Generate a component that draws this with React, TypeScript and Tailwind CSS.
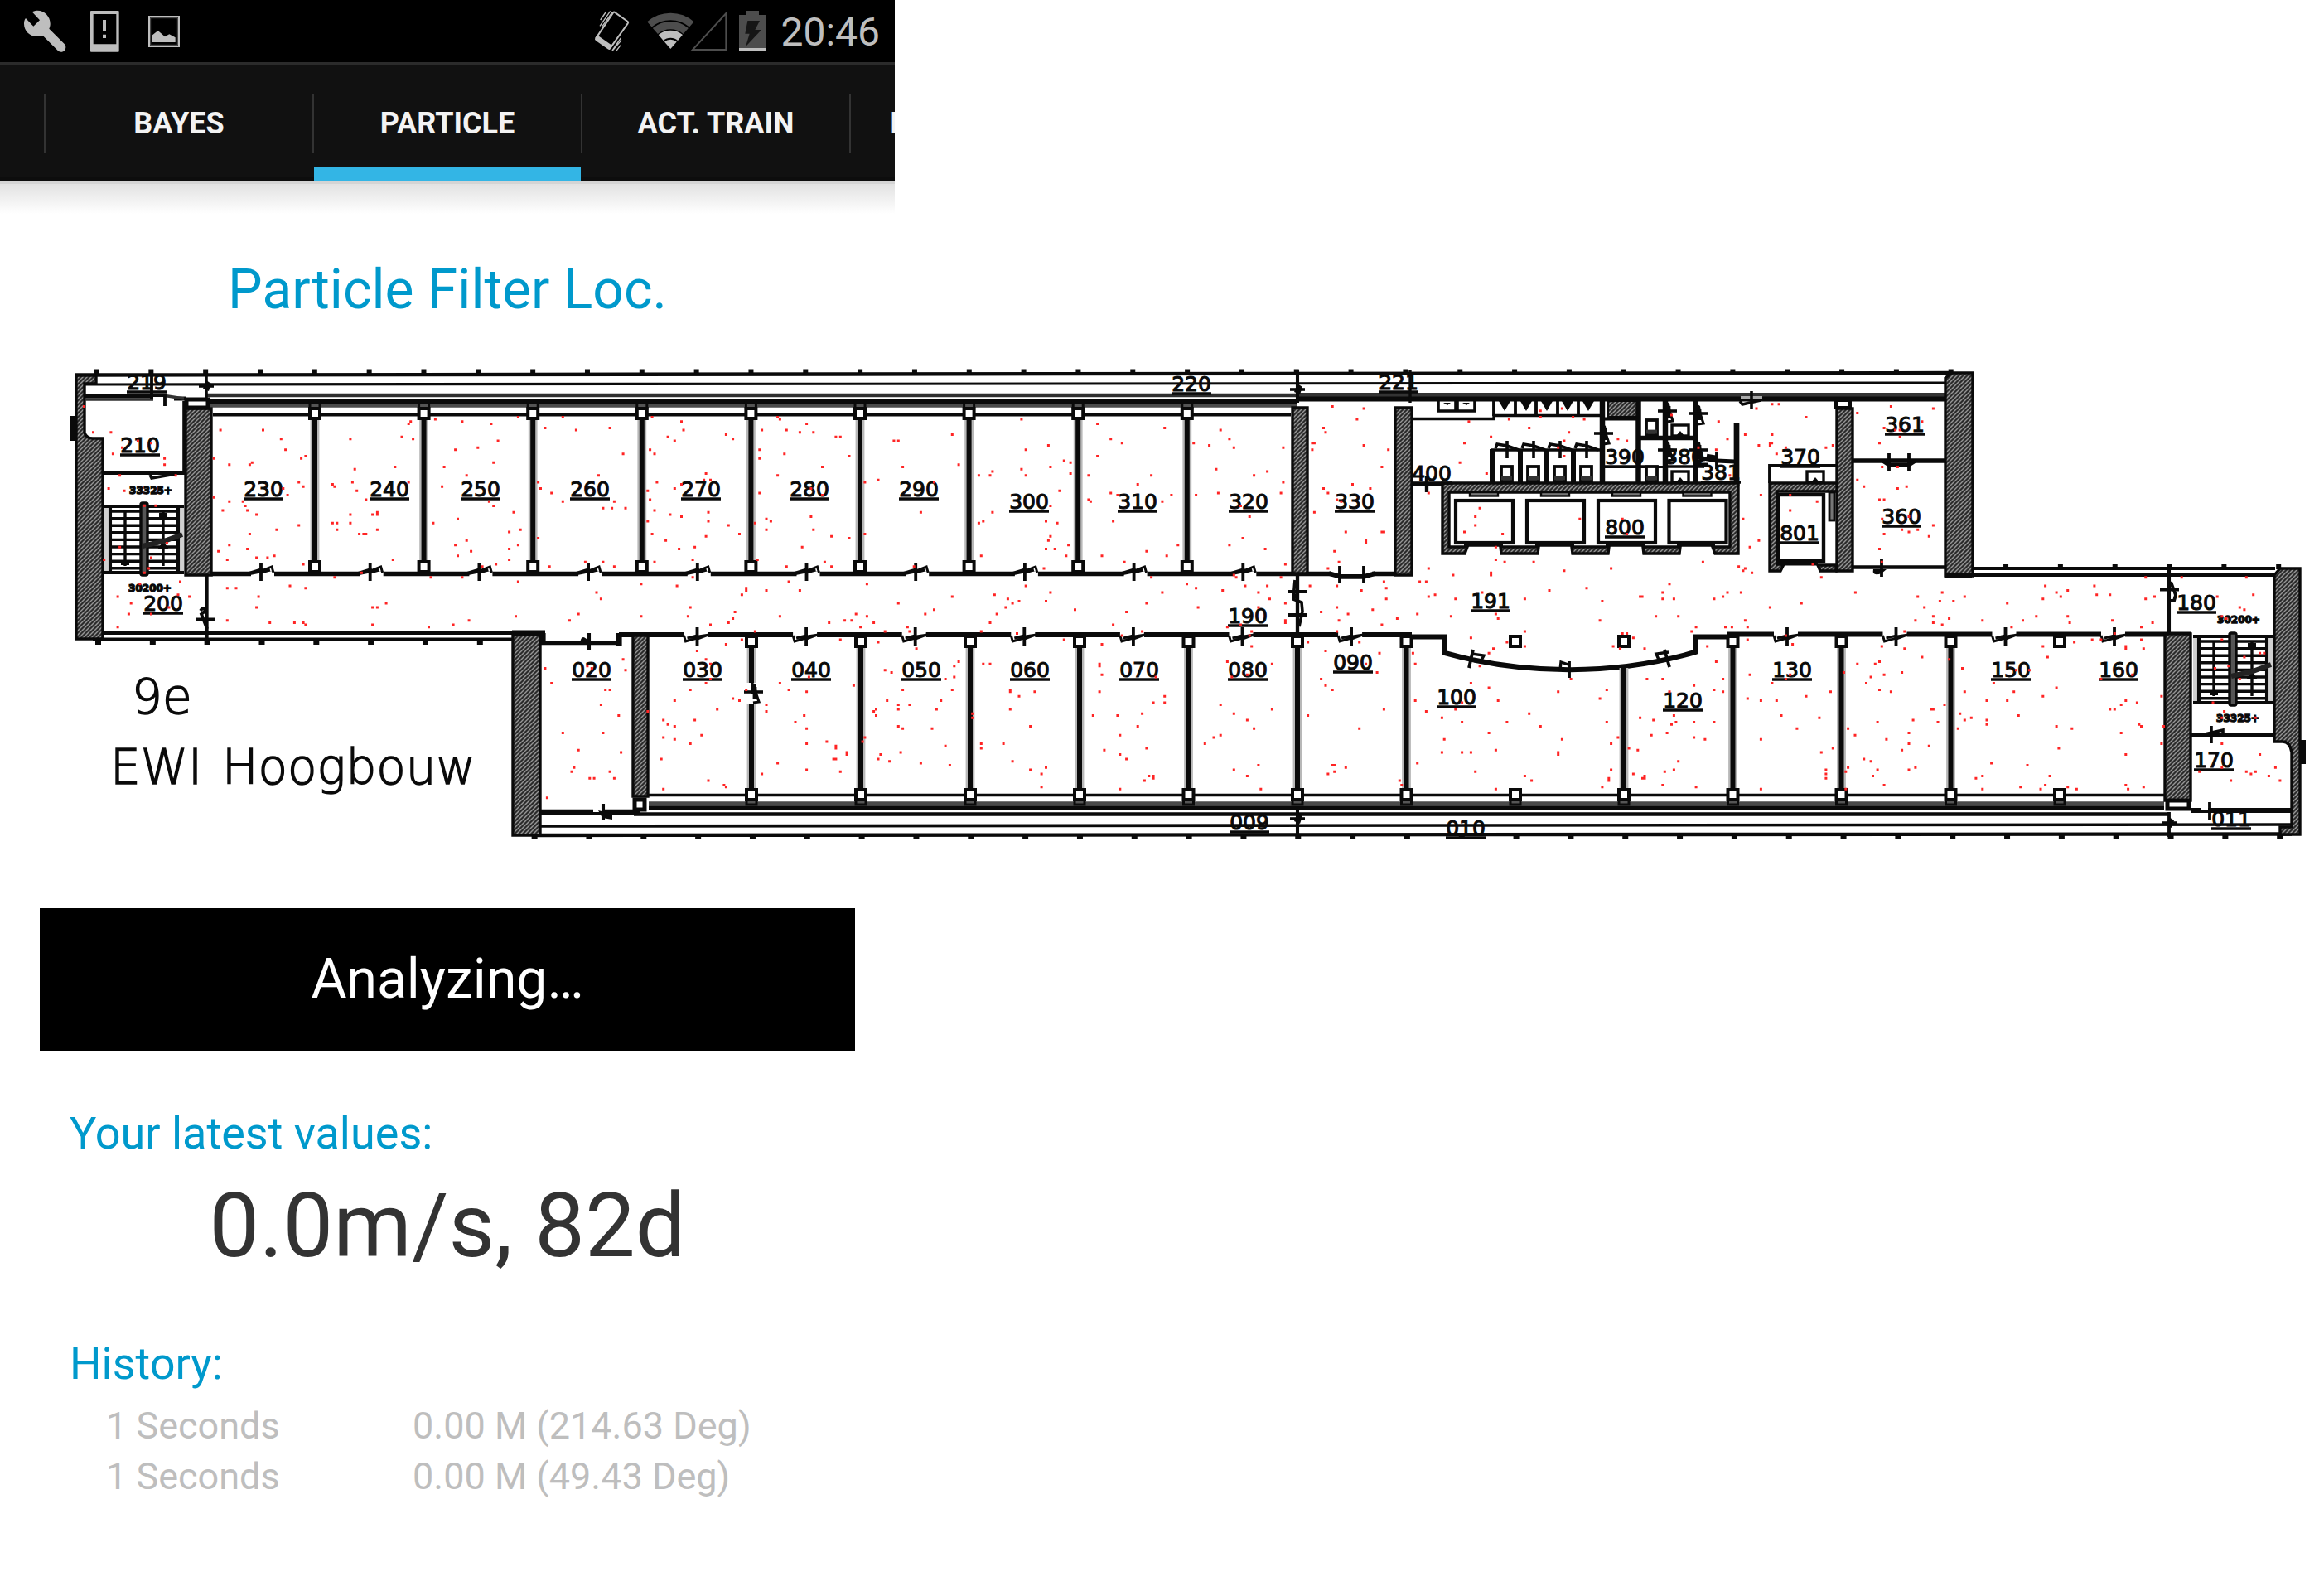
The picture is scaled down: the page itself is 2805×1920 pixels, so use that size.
import React from "react";

type Pt = [number, number];

const PITCH = 65.83;
const WEIGHT = 1.2;
const INK = "#0a0a0a";

/* Particle clouds, one survey tile each: origin, sampling scale and x,y pairs. */
const CLOUDS: { ox: number; sx: number; pts: string }[] = [
  {
    ox: 60,
    sx: 2.8,
    pts: `116,184 147,266 207,266 298,293 343,300 245,314 214,334 388,348 388,368 237,402 426,402 199,443 252,450 320,497 358,497 396,615 237,628 343,661 184,668 335,695 320,709 441,737 305,744 230,784 434,778 472,784 275,805 403,818 267,839 343,839 230,880
577,259 721,259 782,287 797,321 555,348 850,348 865,341 607,368 676,368 684,361 842,423 857,437 789,443 804,464 555,471 607,484 653,484 661,498 668,512 585,512 699,525 842,559 767,573 676,587 607,621 668,634 570,641 600,668 699,661 736,661 759,655 857,682
1220,232 1213,239 1190,280 1228,287 1016,287 1167,375 1031,382 1213,423 1023,423 956,430 963,437 1038,450 1069,478 1107,518 1107,525 1091,525 1016,525 956,552 971,552 1016,552 971,573 1107,573 1046,587 1061,587 1069,587 1160,668 1054,709 963,723
1303,225 1394,232 1492,239 1447,314 1371,321 1333,375 1500,361 1409,402 1326,437 1485,484 1500,498 1379,539 1296,552 1409,607 1371,621 1424,641 1379,655 1508,682 1462,689 1288,723 1394,723
600,757 630,757 812,750 865,757 706,784 699,818 600,859 744,866 827,866 857,866 865,873 1137,805 1091,818 1107,818 1091,873 1281,880 1364,873 1417,859`,
  },
  {
    ox: 600,
    sx: 2.8,
    pts: `3,293 71,218 56,518 79,573 41,580 71,621 41,634 41,668 71,737 63,846
162,252 222,218 267,259 381,252 426,334 343,402 139,423 147,443 184,457 222,484 396,484 358,505 388,505 434,505 139,600 298,675 358,675 177,689 396,689 336,771 351,791 275,839 245,859
524,218 623,232 630,259 577,280 600,293 774,273 797,287 517,321 532,334 706,396 699,416 721,416 540,423 623,430 600,443 509,450 517,478 532,512 585,525 623,532 714,518 714,546 509,546 782,559 524,587 819,587 706,594 570,607 668,628 615,634 661,668 532,675 661,723 487,744 608,750 842,757 842,764 827,778 653,818 804,832 645,846 487,846 797,853 782,866 721,873
948,218 956,225 895,259 978,259 1046,239 1023,266 1069,266 1145,280 1160,280 887,321 887,348 971,334 1190,341 1099,375 948,402 887,457 1061,443 1099,464 1061,532 910,539 925,546 872,552 910,573 1069,573 1130,594 1190,600 1031,628 880,668 1107,675 978,689 1130,689 986,737 910,764 1023,764 956,846 872,894
1538,273 1341,293 1356,293 1371,375 1288,416 1243,423 1477,423 1432,518 1243,587 1409,689 1250,744 1356,805 1477,825 1447,839 1213,839 1250,846 1175,859 1198,859 1122,866 1273,866 1228,880 1387,880 1394,894 1311,894
162,1010 426,982 434,1016 305,1003 320,1010 184,1057 366,1078 381,1078 351,1125 411,1159 222,1214 358,1214 275,1268 419,1275 260,1323 252,1336 381,1336 313,1357 328,1357 396,1357 169,1418
827,920 774,934 676,955 706,982 721,996 721,1044 706,1057 653,1078 842,1078 600,1112 797,1105 819,1112 744,1139 509,1146 562,1173 577,1187 600,1193 668,1173 562,1228 600,1234 691,1221 653,1248 555,1296 714,1364 767,1378 774,1384 562,1391
1160,920 1054,1037 956,1057 986,1078 1046,1084 1205,1064 910,1125 910,1146 1038,1159 1008,1180 1046,1200 1046,1248 1114,1241 1145,1255 1145,1262 1137,1296 1145,1296 1182,1275 1182,1282 948,1309 1046,1330 1160,1336 895,1343
1288,928 1417,948 1311,1016 1333,1023 1371,1078 1318,1112 1356,1125 1394,1125 1356,1139 1500,1112 1485,1139 1281,1139 1273,1146 1281,1159 1356,1193 1371,1200 1470,1200 1243,1228 1235,1241 1364,1275 1296,1282 1288,1296 1326,1303 1432,1309`,
  },
  {
    ox: 1140,
    sx: 2.8,
    pts: `26,273 48,368 26,784 260,225 351,307 275,321 404,355 426,361 358,375 260,382 275,402 426,396 162,389 154,402 116,402 389,450 358,498 162,518 116,552 131,546 343,546 381,552 358,594 351,607 343,634 373,634 419,621 411,655 124,655 336,695 275,750 358,771 343,798 169,778 214,791 230,805 252,798 207,818 177,839 154,866 124,894 245,900 441,825
517,239 744,252 562,287 600,300 517,341 487,402 699,402 653,430 562,457 585,464 767,464 487,478 494,484 736,484 570,546 789,621 683,641 532,655 751,655 608,675 699,723 736,771 683,805 615,832 570,873 668,894 600,907
933,259 963,287 978,314 895,307 842,300 1145,314 918,382 1091,389 1046,402 1145,423 850,464 925,457 1137,457 1001,498 1031,532 1008,600 963,621 1084,634 1152,682 978,716 986,723 1137,723 819,744 850,757 1016,750 1091,750 940,764 1061,771 1099,791 857,818 1061,818 1152,805 1152,859 1152,866 956,880 1001,873 1038,894 1031,907
1311,184 1417,191 1394,225 1281,252 1288,266 1243,300 1250,300 1243,321 1417,307 1379,430 1439,443 1281,443 1296,457 1326,478 1341,484 1250,518 1356,580 1424,607 1424,614 1318,641 1333,675 1296,695 1235,750 1326,750 1409,764 1273,832 1326,818 1447,825 1364,839 1333,859 1326,894
33,1003 48,989 33,1037 3,1044 26,1078 94,1153 94,1166 3,1255 18,1316 404,920 131,996 154,996 222,1078 222,1084 305,1084 252,1098 222,1139 290,1193 199,1248 124,1248 124,1262 230,1303 343,1323 290,1330 328,1343 328,1384
532,934 524,996 524,1003 532,1030 714,1037 524,1084 744,1098 706,1118 744,1118 668,1153 502,1159 585,1159 653,1193 593,1221 683,1262 540,1268 593,1282 615,1296 691,1350 706,1350 706,1357 676,1364 593,1391
1038,941 956,989 1107,996 1023,1030 971,1037 933,1125 1107,1139 978,1153 1023,1173 1046,1200 933,1221 910,1228 880,1248 1061,1316 978,1330 1023,1350 1069,1391
1228,928 1402,928 1288,955 1424,996 1273,1044 1288,1064 1311,1078 1228,1159 1402,1200 1311,1316 1318,1316 1356,1323 1318,1336 1296,1343`,
  },
  {
    ox: 1660,
    sx: 2.8,
    pts: `44,321 22,375 22,580 29,580 29,737 37,757 37,791 74,853 22,873 14,962 6,1023 29,1139 82,1364 89,1378 316,232 391,280 301,300 286,361 376,396 180,457 452,225 520,252 558,198 558,218 631,191 668,218 706,225 654,266 638,293 618,314 638,341 820,287 850,293 1001,212 1092,314 1152,321 1160,232 1190,287 1198,402 1250,273 1288,191 1341,177 1364,177 1341,273 1334,300 1340,300 1334,307 1296,307 1356,334 1387,314 1303,464 1402,464 1402,512
353,505 338,532 338,559 301,580 430,587 691,539 835,539 850,587 1243,539 1296,607 1266,628 407,628 407,668 437,675 535,675 180,695 638,702 797,695 1107,675 263,716 391,709 391,716 1228,689 1250,695 1243,702 1273,709 150,737 172,737 361,771 202,778 180,784 271,791 505,791 588,764 714,757 767,798 895,784 902,784 994,744 971,771 971,791 1009,791 1190,771 1175,784 1145,791 1236,771 1334,818 1440,805 142,839 256,846 407,839 415,853 759,859 948,846 1024,846 1250,859 1258,880 1084,880 1069,894 1183,880 1205,880 505,894 323,914 445,928 505,941 399,948 384,962 353,1003 835,900 850,900 872,914 804,941 827,948 910,948 1122,941 1258,920 1387,907 1410,934
127,962 135,996 135,1112 172,1146 271,1139 293,1118 323,1057 384,1071 415,1112 225,1166 293,1180 445,1180 384,1214 520,1153 558,1193 661,1044 618,1084 782,1078 759,1105 782,1180 820,1228 797,1248 233,1234 225,1275 293,1275 323,1275 407,1268 631,1234 618,1275 618,1282 142,1309 338,1336 505,1350 528,1364 407,1391 797,1330 789,1357 789,1364 767,1384
1152,989 918,1044 971,1044 994,1084 1077,1064 1145,1078 1175,1044 1175,1084 895,1166 940,1173 1009,1159 1016,1180 1001,1187 1077,1180 1145,1180 986,1214 933,1221 1077,1228 1114,1234 857,1262 887,1268 1024,1303 1009,1330 978,1336 872,1343 910,1350 903,1357 910,1357 971,1378 1084,1384
1266,1030 1402,1030 1387,1044 1341,1057 1258,1105 1303,1112 1356,1112 1455,1098 1372,1159 1425,1200 1303,1234 1303,1391`,
  },
  {
    ox: 2180,
    sx: 2.509,
    pts: `0,218 60,314 81,307 33,484 20,682 46,723 149,771 257,184 155,205 385,191 351,232 236,252 270,259 284,259 284,280 222,300 230,375 277,375 155,416 175,437 277,443 304,437 222,478 236,478 311,532 230,539 385,559 290,573 338,573 311,580 236,587 372,594 222,634 229,675
338,784 412,771 405,798 446,798 480,784 358,818 331,859 385,846 433,853 385,866 412,873 298,894 609,805 534,859 656,859 622,880 697,846 724,750 758,771 792,764 771,784 717,791 792,846 798,866 873,750 880,778 920,778 927,859 1028,723 1028,791 1055,784 1049,866 1015,880 934,900 1137,723 1333,723 1245,784 1354,778 1313,818 1327,825 1259,846 1272,853
40,1166 74,1084 0,1098 46,1275 81,1262 60,1330 60,1343 60,1357 114,1023 120,1391 127,1200 148,1221 120,1336 127,1323 229,941 298,948 351,975 155,996 209,996 222,989 236,1030 290,1023 196,1037 182,1057 222,1078 257,1084 378,1139 385,1139 419,1125 324,1173 216,1180 399,1180 311,1214 243,1234 311,1248 372,1255 290,1268 175,1296 196,1303 216,1330 311,1330 331,1323 202,1350 236,1378 433,982
473,1010 568,1057 480,1084 547,1112 609,1112 629,1084 636,1016 676,1016 717,941 731,975 812,928 866,920 893,920 1015,920 968,941 968,948 1022,948 893,1044 988,1030 758,1071 717,1098 466,1153 480,1173 500,1166 547,1173 547,1187 643,1159 460,1200 758,1193 805,1200 920,1139 934,1139 954,1125 968,1112 1002,1118 1076,1098 1008,1187 1015,1193 954,1214 1083,1193 1076,1248 765,1262 968,1282 561,1309 670,1316 534,1350 514,1357 738,1350 534,1391 649,1384 724,1378 710,1391 792,1384 819,1391 968,1378 975,1391 1022,1384
1259,920 1327,975 1374,962 1387,962 1279,1003 1238,1010 1313,1044 1232,1118 1266,1146 1259,1166 1361,1166 1259,1248 1374,1282 1191,1336 1259,1323 1333,1336 1347,1343 1361,1336 1421,1323 1401,1350 1435,1364 1286,1364`,
  },
];

const particlePath = CLOUDS.map(({ ox, sx, pts }) =>
  pts
    .trim()
    .split(/\s+/)
    .map((p) => {
      const [x, y] = p.split(",").map(Number);
      return `M${(ox + x / sx - 1.5).toFixed(1)} ${(420 + y / 2.613).toFixed(1)}h3`;
    })
    .join("")
).join("");

const ROOMS: [string, number, number][] = [
  ["210", 169, 546], ["230", 318, 599], ["240", 470, 599], ["250", 580, 599], ["260", 712, 599],
  ["270", 846, 599], ["280", 977, 599], ["290", 1109, 599], ["300", 1242, 614], ["310", 1373, 614],
  ["320", 1507, 614], ["330", 1635, 614], ["190", 1506, 752], ["200", 197, 737], ["020", 714, 817],
  ["030", 848, 817], ["040", 979, 817], ["050", 1112, 817], ["060", 1243, 817], ["070", 1375, 817],
  ["080", 1506, 817], ["090", 1633, 808], ["100", 1758, 850], ["120", 2031, 854], ["130", 2163, 817],
  ["150", 2427, 817], ["160", 2557, 817], ["170", 2672, 926], ["180", 2651, 736], ["191", 1799, 734],
  ["800", 1961, 645], ["801", 2172, 652], ["360", 2295, 632], ["361", 2299, 521], ["370", 2173, 560],
  ["390", 1961, 560], ["380", 2033, 560], ["381", 2077, 579], ["400", 1728, 580], ["219", 177, 470],
  ["220", 1438, 472], ["221", 1688, 470], ["009", 1508, 1001], ["010", 1769, 1008], ["011", 2693, 997],
];

const range = (a: number, b: number) => Array.from({ length: b - a + 1 }, (_, i) => a + i);

function Hatch({ d }: { d: string }) {
  return <path d={d} fill="url(#hatch)" stroke={INK} strokeWidth="3.4" />;
}

function Line({ d, w = 3, c = INK }: { d: string; w?: number; c?: string }) {
  return <path d={d} fill="none" stroke={c} strokeWidth={w * WEIGHT} />;
}

function Wall({ x, y1, y2 }: { x: number; y1: number; y2: number }) {
  return (
    <>
      <Line d={`M${x} ${y1}V${y2}`} w={9} c="#b8b8b8" />
      <Line d={`M${x} ${y1}V${y2}`} w={5} />
    </>
  );
}

function Column({ x, y }: { x: number; y: number }) {
  return <rect x={x - 6} y={y - 6} width="12" height="12" fill="#fff" stroke={INK} strokeWidth="4" />;
}

function DoorUp({ x, y }: { x: number; y: number }) {
  return (
    <g>
      <path d={`M${x - 12} ${y - 2}h28v6h-28z`} fill="#fff" />
      <path d={`M${x - 18} ${y - 1}L${x - 2} ${y - 6}h4v5l-20 4z`} fill={INK} />
      <Line d={`M${x} ${y - 3}L${x + 13} ${y - 8}L${x + 15} ${y - 1}M${x} ${y - 1}L${x + 11} ${y - 4}`} w={2.4} />
      <Line d={`M${x} ${y - 12}V${y + 9}`} w={3.2} />
    </g>
  );
}

function DoorDown({ x, y }: { x: number; y: number }) {
  return (
    <g>
      <path d={`M${x - 16} ${y - 5}h29v7h-29z`} fill="#fff" />
      <path d={`M${x + 18} ${y - 1}L${x + 2} ${y + 5}h-4v-5l20-3z`} fill={INK} />
      <Line d={`M${x} ${y + 3}L${x - 14} ${y + 7}L${x - 16} ${y}M${x} ${y}L${x - 12} ${y + 3}`} w={2.4} />
      <Line d={`M${x} ${y - 10}V${y + 12}`} w={3.2} />
    </g>
  );
}

function DoorSide({ x, y }: { x: number; y: number }) {
  return (
    <g>
      <path d={`M${x - 3} ${y - 13}L${x + 3} ${y - 9}L${x + 5} ${y + 2}H${x - 3}z`} fill={INK} />
      <Line d={`M${x + 2} ${y - 6}V${y + 8}`} w={4} />
      <Line d={`M${x + 3} ${y}L${x + 7} ${y + 12}L${x} ${y + 13}`} w={2.6} />
      <Line d={`M${x - 11} ${y}H${x + 12}`} w={3} />
    </g>
  );
}

function Star({ x, y }: { x: number; y: number }) {
  return (
    <g>
      <Line d={`M${x - 9} ${y}h18`} />
      <path d={`M${x - 4} ${y + 3}L${x} ${y - 7}L${x + 6} ${y - 3}L${x + 3} ${y + 6}z`} fill={INK} />
    </g>
  );
}

function Stairs({ x, y }: { x: number; y: number }) {
  return (
    <g>
      <path d={`M${x} ${y}h7v80h-7zM${x + 89} ${y}h7v80h-7z`} fill="#d0d0d0" />
      <Line d={`M${x} ${y}h96M${x} ${y + 80}h96`} w={3.2} />
      <Line d={`M${x + 7} ${y}v80M${x + 89} ${y}v80`} w={3.4} />
      {range(0, 8).map((i) => (
        <Line key={i} d={`M${x + 7} ${y + 6 + i * 8.6}h36M${x + 52} ${y + 6 + i * 8.6}h36`} w={2.8} />
      ))}
      <Line d={`M${x + 25} ${y + 6}v66M${x + 71} ${y + 6}v66`} w={2.8} />
      <rect x={x + 20} y={y + 65} width="10" height="6" fill={INK} />
      <rect x={x + 66} y={y + 8} width="10" height="7" fill={INK} />
      <path d={`M${x + 64} ${y + 52}l7-10l7 10z`} fill={INK} />
      <rect x={x + 44} y={y - 4} width="8" height="87" rx="2" fill="#555" stroke={INK} strokeWidth="3.4" />
      <Line d={`M${x + 46} ${y + 48}L${x + 72} ${y + 42}L${x + 94} ${y + 34}`} w={5} c="#222" />
    </g>
  );
}

function Bowl({ x, y }: { x: number; y: number }) {
  return (
    <>
      <rect x={x} y={y} width="13" height="18" fill="#fff" stroke={INK} strokeWidth="3.8" />
      <Line d={`M${x} ${y + 14}h13`} w={4} c="#333" />
    </>
  );
}

function Basin({ x, y }: { x: number; y: number }) {
  return (
    <>
      <rect x={x} y={y} width="20" height="13" fill="#fff" stroke={INK} strokeWidth="3.4" />
      <path d={`M${x + 5} ${y + 13}l5-6l5 6z`} fill={INK} />
    </>
  );
}

function FloorPlan() {
  const upperWalls = range(0, 8).map((i) => 380 + i * 131.6);
  const lowerWalls = [907, 1039, 1171, 1303, 1434.5, 1566, 1697.5, 1960, 2091.5, 2222.5, 2354.5];
  const lowerColumns = [...lowerWalls, 1829, 2486];
  const cars = [1757, 1843, 1929, 2014.5];
  const feet: Pt[] = [
    [1811, 1857],
    [1897, 1942],
    [1983, 2028],
  ];
  return (
    <svg viewBox="0 420 2805 600" className="mt-[30px] block h-auto w-full" role="img" aria-label="Floor plan of 9e EWI Hoogbouw">
      <defs>
        <pattern id="hatch" width="5" height="5" patternUnits="userSpaceOnUse">
          <rect width="5" height="5" fill="#2b2b2b" />
          <path d="M-1 1L1 -1M0 5L5 0M4 6L6 4" stroke="#969696" strokeWidth="1.4" />
        </pattern>
      </defs>

      {/* facade lines */}
      <Line d="M91 452.5L2355 450" w={3.6} />
      <Line d="M102 464L2350 462" w={2.6} />
      <Line d="M250 477H1566" w={3.6} c="#2e2e2e" />
      <Line d="M250 484H1566" w={5} />
      <Line d="M252 489.5H1566" w={3.6} c="#4a4a4a" />
      <Line d="M1566 477H2348" w={5} c="#333" />
      <Line d="M1566 481.5H2348" w={5} />
      <Line d="M257 500.5H1558" w={3.2} />
      {range(0, 34).map((i) => (
        <rect key={i} x={113.5 + i * PITCH} y="445.5" width="6" height="6" fill={INK} />
      ))}
      <Line d="M125 764H620M112 771.5H622" w={3.4} />
      {range(0, 7).map((i) => (
        <rect key={i} x={115 + i * PITCH} y="771" width="7" height="7" fill={INK} />
      ))}
      <Line d="M2382 686H2746M2382 694H2746" w={3.4} />
      {range(35, 40).map((i) => (
        <rect key={i} x={114 + i * PITCH} y="681" width="6" height="6" fill={INK} />
      ))}
      <Line d="M783 959.5H2612" w={3} />
      <Line d="M783 970H2612" w={4.5} c="#4a4a4a" />
      <Line d="M783 975H2612" w={4} />
      <Line d="M765 982.5H2618" w={3.6} />
      <Line d="M652 997L2766 995" w={3} />
      <Line d="M645 1008L2766 1006.5" w={3.6} />
      {range(8, 40).map((i) => (
        <rect key={i} x={115 + i * PITCH} y="1007" width="7" height="6" fill={INK} />
      ))}

      {/* corridor walls */}
      <Line d="M256 692.5H1683" w={4.6} />
      <Line d="M747 766H1704" w={5} />
      <Line d="M2085 765.5H2645" w={5} />
      <Line d="M1704 768.5H1744V788C1840 815 1950 815 2046 787V768.5H2092" w={5} />

      {/* room partitions */}
      {upperWalls.map((x) => (
        <g key={x}>
          <Wall x={x} y1={500} y2={684} />
          <rect x={x - 6} y="486" width="12" height="7" fill="#555" stroke={INK} strokeWidth="3" />
          <Column x={x} y={499} />
          <Column x={x} y={684} />
        </g>
      ))}
      {lowerWalls.map((x) => (
        <Wall key={x} x={x} y1={x === 1960 ? 806 : 776} y2={959} />
      ))}
      {lowerColumns.map((x) => (
        <g key={x}>
          <rect x={x - 6} y="964" width="12" height="7" fill="#555" stroke={INK} strokeWidth="3" />
          <Column x={x} y={959} />
          <Column x={x} y={774} />
        </g>
      ))}
      {range(0, 9).map((i) => (
        <DoorUp key={i} x={315 + i * 131.7} y={692} />
      ))}
      {range(0, 6).map((i) => (
        <DoorDown key={i} x={841.5 + i * 131.6} y={767} />
      ))}
      {[2157, 2288.5, 2420.5, 2552].map((x) => (
        <DoorDown key={x} x={x} y={767} />
      ))}

      {/* load-bearing blocks */}
      <path d="M84 502h7v30h-7zM2776 893h7v29h-7z" fill={INK} />
      <Hatch d="M92 453H116V463H102V522Q104 529 112 529H124V771H92Z" />
      <Hatch d="M224 493H255V694H224Z" />
      <Hatch d="M619 764H652V1008H619Z" />
      <Line d="M652 776H747" w={3.6} />
      <Line d="M618 764H658M655 764V778M747 764V780" w={6} />
      <Hatch d="M764 767H782V961H764Z" />
      <Hatch d="M1560 492H1578V692H1560Z" />
      <Hatch d="M1684 492H1704V694H1684Z" />
      <Hatch d="M2217 493H2236V689H2217Z" />
      <Hatch d="M2348 456L2356 450H2381V695H2348Z" />
      <Line d="M2348 694H2380" w={5} />
      <Hatch d="M2745 694L2752 686H2776V1007H2752V998H2766V908Q2764 895 2755 895H2745Z" />
      <Hatch d="M2613 765H2644V966H2613Z" />
      <rect x="225" y="482" width="26" height="10" fill="#fff" stroke={INK} strokeWidth="5" />
      <rect x="2616" y="966" width="26" height="10" fill="#fff" stroke={INK} strokeWidth="5" />
      <rect x="2216" y="483" width="17" height="9" fill="#fff" stroke={INK} strokeWidth="4" />
      <rect x="766" y="965" width="12" height="12" fill="#fff" stroke={INK} strokeWidth="5" />

      {/* west stairwell */}
      <Line d="M102 478H185M210 481H224" w={4} />
      <Line d="M102 482H185M196 477L222 481" w={3} c="#333" />
      <Line d="M183 477H199V490M183 446V482" w={3.2} />
      <Line d="M249 446V482M222 484V571" w={3} />
      <Line d="M125 570.5H223" w={4} />
      <Line d="M181 573L183 577L212 572" w={3} />
      <Stairs x={126} y={611} />
      <Line d="M249.5 694V773" w={3.6} />
      <Line d="M237 747.5H260M242 737q4-6 6 0l-5 4q4 10 7 18" w={3.2} />
      <Star x={249} y={466} />

      {/* room 020 */}
      <Line d="M652 980H772" w={5.6} />
      <path d="M712 776q-10-14-12 0h12z" fill={INK} />
      <Line d="M711 764V784M728 970V990" w={3.4} />
      <path d="M716 976h10v4h-10z" fill="#fff" />
      <path d="M722 978l17 4v7l-12-2z" fill={INK} />
      <rect x="901" y="824" width="12" height="25" fill="#fff" />
      <DoorSide x={909} y={835} />

      {/* corridor junction and room 330 */}
      <Line d="M1566 446V486" w={3.4} />
      <Line d="M1566 694V766" w={3.6} />
      <Star x={1566} y={470} />
      <Line d="M1554 714H1577M1554 742H1577" w={3.2} />
      <Line d="M1563 700L1561 723L1571 727L1572 738L1568 756M1561 723L1566 716" w={3} />
      <rect x="1606" y="689" width="50" height="4" fill="#fff" />
      <Line d="M1604 692L1618 696H1646L1660 692" w={4.6} />
      <Line d="M1617 683V704M1646 683V704" w={3.2} />
      <Line d="M1566 976V1010" w={3.4} />
      <Star x={1566} y={988} />

      {/* wash rooms */}
      <Line d="M1702 446V486M1705 505.5H1803V501.5H1934" w={2.8} />
      <Line d="M1803 484V502M1829 484V502M1854 484V502M1880 484V502M1905 484V502" w={3.2} />
      {[1816, 1842, 1867, 1892, 1917].map((x) => (
        <path key={x} d={`M${x - 7} 484h14l-7 12z`} fill={INK} />
      ))}
      <path d="M1736 484v12h21v-12M1759 484v12h21v-12" fill="none" stroke={INK} strokeWidth="3.6" />
      <path d="M1742 486h9l-4 3zM1765 486h9l-4 3z" fill={INK} />
      <rect x="1941" y="484" width="36" height="19" fill="url(#hatch)" stroke={INK} strokeWidth="2" />
      <Line d="M1934 484V583M1977.5 484V583M2010 484V583M2046.500 484V583" w={5.4} />
      <Line d="M1934 505.5H1978" w={3.4} />
      <Line d="M1978 528.5H2048" w={4.6} />
      <Line d="M1936 563.5H2012" w={2.6} />
      <Line d="M1801 542V583M1835 542V583M1867 542V583M1899 542V583" w={5} />
      <Line d="M1799 543H1932" w={3} />
      {[1819, 1851, 1883, 1915].map((x) => (
        <g key={x}>
          <Line d={`M${x} 532V553M${x - 14} 541L${x - 12} 536L${x} 538L${x + 14} 543`} w={3} />
          <Bowl x={x - 7} y={563} />
        </g>
      ))}
      <Bowl x={1987} y={507} />
      <Bowl x={1987} y={563} />
      <Basin x={2018} y={513} />
      <Basin x={2018} y={569} />
      <DoorSide x={1935} y={523} />
      <DoorSide x={2012} y={496} />
      <DoorSide x={2049} y={499} />
      <DoorSide x={2012} y={543} />
      <DoorSide x={2049} y={543} />
      <Line d="M2049 552L2072 556L2094 557M2060 550L2072 552M2050 561H2062" w={4} />
      <Line d="M2072 545V566" w={3.2} />
      <Line d="M2096 510V586" w={5.6} />
      <Line d="M1705 584H1742M1722 574V594" w={3.6} />

      {/* elevator shafts */}
      <path d="M1741 583H2098V668H2070L2067 660H2088V594H1749V660H1771L1768 668H1741Z" fill="url(#hatch)" stroke={INK} strokeWidth="3.4" />
      {feet.map(([a, b]) => (
        <path key={a} d={`M${a} 660H${b}L${b - 1} 668H${a + 1}Z`} fill="url(#hatch)" stroke={INK} strokeWidth="3.4" />
      ))}
      <Line d="M1767 657.5H1814M1853 657.5H1900M1938 657.5H1986M2024 657.5H2070" w={3.6} />
      {cars.map((x) => (
        <g key={x}>
          <rect x={x} y="604" width="69" height="51" fill="#fff" stroke={INK} strokeWidth="4.2" />
          <rect x={x + 17} y="594" width="34" height="4.5" fill="#777" stroke={INK} strokeWidth="2.4" />
        </g>
      ))}
      <path d="M2136 583H2217V593H2145V681H2153L2149 689H2136Z" fill="url(#hatch)" stroke={INK} strokeWidth="3.4" />
      <path d="M2194 682h22v7h-19z" fill="url(#hatch)" stroke={INK} strokeWidth="3.4" />
      <rect x="2146" y="597" width="55" height="80" fill="#fff" stroke={INK} strokeWidth="4.4" />
      <Line d="M2152 680H2194" w={4} />
      <rect x="2208" y="594" width="6" height="34" fill="#777" stroke={INK} strokeWidth="2.8" />
      <Line d="M2136 583V562H2216" w={3.2} />
      <Basin x={2181} y={569} />
      <rect x="2101" y="478" width="26" height="3.5" fill="#aaa" />
      <Line d="M2114 472V493M2100 484L2103 488L2125 483" w={3} />

      {/* rooms 360 and 361 */}
      <Line d="M2236 556H2348" w={4.4} />
      <Line d="M2272 556L2280 561H2304L2312 556" w={4} />
      <Line d="M2280 547V569M2304 547V569" w={3.2} />
      <Line d="M2236 684.5H2348" w={3.6} />
      <path d="M2271 692q-12 4-10-5h16z" fill={INK} />
      <Line d="M2271 675V696" w={3.2} />

      {/* curved wall doors */}
      <Line d="M1778 784L1773 806M1894 798V818M2009 784L2015 805" w={3.2} />
      <Line d="M1776 789L1791 791L1788 797M1883 808L1884 799L1893 802M2002 796L1999 789L2014 787" w={2.8} />

      {/* east stairwell */}
      <Line d="M2618 682V766" w={3.4} />
      <Line d="M2607 711.5H2630M2620 702l6 16l-2 7h-6" w={3.2} />
      <Stairs x={2647} y={768} />
      <Line d="M2645 887H2745" w={3.4} />
      <Line d="M2669 876V897M2652 888L2683 881V888" w={3} />
      <Line d="M2645 978H2766" w={5} />
      <Line d="M2618 980V1010M2667 968V989" w={3.2} />
      <rect x="2656" y="975" width="9" height="3" fill="#fff" />
      <Star x={2618} y={993} />

      {/* labels */}
      <g fontFamily="'DejaVu Sans', sans-serif" fill={INK} stroke={INK}>
        <g fontSize="25" textAnchor="middle" strokeWidth="1.1">
          {ROOMS.map(([name, x, y]) => (
            <text key={name} x={x} y={y}>
              {name}
            </text>
          ))}
        </g>
        {ROOMS.map(([name, x, y]) => (
          <Line key={name} d={`M${x - 24} ${y + 3}h48`} w={2.8} />
        ))}
        <g fontSize="12" fontWeight="bold" textAnchor="middle" strokeWidth="1.4">
          <text x="182" y="596">33325+</text>
          <text x="181" y="714">30200+</text>
          <text x="2702" y="752">30200+</text>
          <text x="2701" y="871">33325+</text>
        </g>
        <g fontSize="58" fontFamily="'DejaVu Sans Light', 'DejaVu Sans', sans-serif" fontWeight="200" strokeWidth="1.5">
          <text x="159" y="861">9e</text>
          <text x="133" y="946">EWI</text>
          <text x="268" y="946">Hoogbouw</text>
        </g>
      </g>

      <path d={particlePath} stroke="#ff2424" strokeWidth="3" fill="none" />
    </svg>
  );
}

function WrenchIcon() {
  return (
    <svg viewBox="84 36 156 156" className="h-[52px] w-[52px]" fill="#bebebe" aria-hidden="true">
      <path d="M116 43C122 40 129 38 135 38C162 38 182 60 182 86C182 93 180 99 178 104L233 159C240 166 239 176 234 182C228 189 218 191 210 184L155 129C149 131 142 132 135 132C108 132 87 112 87 86C87 79 88 72 93 66L121 95L144 73Z" />
    </svg>
  );
}

function PhoneAlertIcon() {
  return (
    <svg viewBox="324 36 108 156" className="ml-7 h-[52px] w-9" fill="#bebebe" aria-hidden="true">
      <path fillRule="evenodd" d="M330 39H428Q431 39 431 42V185Q431 188 428 188H330Q327 188 327 185V42Q327 39 330 39ZM338 51V160H421V51ZM372 72H384V111H372ZM372 125H384V138H372Z" />
    </svg>
  );
}

function PictureIcon() {
  return (
    <svg viewBox="534 36 120 156" className="ml-[34px] h-[52px] w-10" fill="#bebebe" aria-hidden="true">
      <rect x="540" y="60" width="108" height="108" fill="none" stroke="#bebebe" strokeWidth="6" />
      <rect x="545" y="65" width="98" height="98" fill="none" stroke="#555" strokeWidth="3" />
      <path d="M552 153V127L572 111L597 133L613 124L635 136V153Z" />
    </svg>
  );
}

function VibrateIcon() {
  return (
    <svg viewBox="50 36 129 153" className="h-[51px] w-[43px]" fill="none" stroke="#bebebe" aria-hidden="true">
      <path d="M124 44L172 78Q175 81 172 85L110 172L58 137L118 48Q121 42 124 44Z" strokeWidth="6" strokeLinejoin="round" />
      <path d="M60 126L117 166L108 179Q105 182 100 178L56 147Q51 143 54 137Z" fill="#bebebe" stroke="none" />
      <path d="M94 42L73 72M109 40L71 94M116 44L80 95M147 138L116 183M149 146L116 184M146 164L130 185" strokeWidth="4" />
    </svg>
  );
}

function WifiIcon() {
  return (
    <svg viewBox="241 36 177 147" className="ml-[20px] h-[49px] w-[59px]" fill="none" aria-hidden="true">
      <path d="M252.700 85.300A117 117 0 0 1 405.300 85.300" stroke="#4d4d4d" strokeWidth="25" />
      <path d="M273.600 109.600A85 85 0 0 1 384.400 109.600" stroke="#4d4d4d" strokeWidth="28" />
      <path d="M294.100 133.400A53.500 53.500 0 0 1 363.900 133.400" stroke="#bebebe" strokeWidth="27" />
      <path d="M329 174L306.800 148.200A34 34 0 0 1 351.200 148.200Z" fill="#bebebe" />
    </svg>
  );
}

function SignalIcon() {
  return (
    <svg viewBox="398 33 135 147" className="-ml-1.5 h-[49px] w-[45px]" fill="none" stroke="#4d4d4d" aria-hidden="true">
      <path d="M528 42V174H407Z" strokeWidth="6" />
    </svg>
  );
}

function BatteryIcon() {
  return (
    <svg viewBox="576 36 96 147" className="ml-3.5 h-[49px] w-8" aria-hidden="true">
      <path d="M601 36H648V51H672V180H576V51H601Z" fill="#4d4d4d" />
      <path d="M576 171H672V180H576Z" fill="#bebebe" />
      <path d="M607 72H651L634 105H657L600 166L614 119H598Z" fill="#161616" />
    </svg>
  );
}

const TABS = ["BAYES", "PARTICLE", "ACT. TRAIN"];

function Divider() {
  return <span className="h-[72px] w-0.5 flex-none bg-[#333333]" />;
}

const HISTORY = [
  { time: "1 Seconds", move: "0.00 M (214.63 Deg)" },
  { time: "1 Seconds", move: "0.00 M (49.43 Deg)" },
];

export default function App() {
  return (
    <main className="w-full bg-white pb-24 font-['Roboto',sans-serif]">
      <header className="w-full max-w-[1080px]">
        <div className="flex h-[78px] items-center border-b-[3px] border-[#2b2b2b] bg-black pr-[18px] pl-7">
          <WrenchIcon />
          <PhoneAlertIcon />
          <PictureIcon />
          <div className="ml-auto flex items-center">
            <VibrateIcon />
            <WifiIcon />
            <SignalIcon />
            <BatteryIcon />
            <time className="ml-[18px] pt-0.5 text-[48px] leading-[56px] text-[#bebebe]">20:46</time>
          </div>
        </div>
        <nav className="flex h-[141px] items-center overflow-hidden bg-[#111111] pl-[53px] shadow-[inset_0_-6px_0_#0d0d0d]">
          {TABS.map((tab) => (
            <React.Fragment key={tab}>
              <Divider />
              <button
                type="button"
                className={
                  tab === "PARTICLE"
                    ? "h-full w-[322px] flex-none border-b-[18px] border-[#33b5e5] pt-[18px] text-[36px] font-bold text-[#f3f3f3]"
                    : "h-full w-[322px] flex-none border-b-[18px] border-transparent pt-[18px] text-[36px] font-bold text-[#f3f3f3]"
                }
              >
                {tab}
              </button>
            </React.Fragment>
          ))}
          <Divider />
          <button type="button" className="h-full flex-none border-b-[18px] border-transparent pt-[18px] pl-[47px] text-[36px] font-bold text-[#f3f3f3]">
            I
          </button>
        </nav>
        <div className="h-[39px] border-t-[3px] border-[#d4d4d4] bg-linear-to-b from-[#e2e2e2] to-white" />
        <h1 className="mt-[52px] text-center text-[66px] leading-[80px] text-[#0099cc]">Particle Filter Loc.</h1>
      </header>

      <FloorPlan />

      <section className="w-full max-w-[1080px] px-12 pt-[76px]">
        <button type="button" className="block h-[172px] w-full bg-black text-[66px] leading-[80px] text-white">
          Analyzing…
        </button>
        <div className="px-9">
          <h2 className="mt-[68px] text-[54px] leading-[64px] text-[#0099cc]">Your latest values:</h2>
          <p className="mt-[15px] text-center text-[108px] leading-[128px] text-[#333333]">0.0m/s, 82d</p>
          <h2 className="mt-[71px] text-[54px] leading-[64px] text-[#0099cc]">History:</h2>
          <table className="mt-3 ml-11 text-left text-[45px] leading-[61px] text-[#bebebe]">
            <tbody>
              {HISTORY.map((row) => (
                <tr key={row.move}>
                  <td className="w-[370px] p-0">{row.time}</td>
                  <td className="p-0">{row.move}</td>
                </tr>
              ))}
            </tbody>
          </table>
        </div>
      </section>
    </main>
  );
}
